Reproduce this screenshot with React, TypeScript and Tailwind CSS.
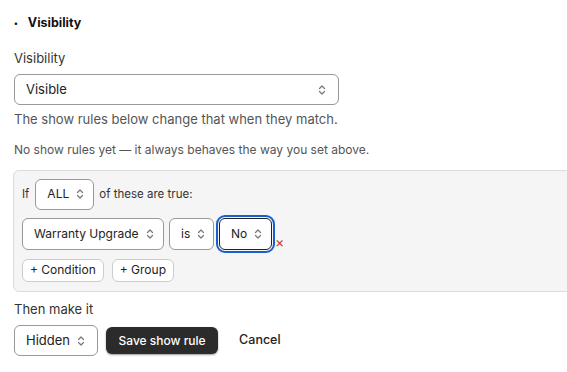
import React from 'react';

const Chevrons: React.FC = () => (
    <svg width="10" height="12" viewBox="0 0 10 12" fill="none" className="shrink-0 text-[#777]">
        <path d="M2.5 4.5 L5 2 L7.5 4.5" stroke="currentColor" strokeWidth="1.2" strokeLinecap="round" strokeLinejoin="round" />
        <path d="M2.5 7.5 L5 10 L7.5 7.5" stroke="currentColor" strokeWidth="1.2" strokeLinecap="round" strokeLinejoin="round" />
    </svg>
);

const Select: React.FC<{ label: string; className?: string; focused?: boolean }> = ({ label, className = '', focused }) => (
    <div
        className={`flex items-center justify-between gap-[6px] whitespace-nowrap rounded-[6px] border bg-white px-[11px] text-[#222] ${
            focused ? 'border-[#222] outline-2 outline-[#1a5fd0] outline-offset-[1px]' : 'border-[#999]'
        } ${className}`}
    >
        <span>{label}</span>
        <Chevrons />
    </div>
);

export default function App() {
    return (
        <div className="min-h-[372px] w-[567px] overflow-hidden bg-white font-['Inter',sans-serif] text-[#222]">
            {/* Section heading */}
            <div className="flex items-center gap-[10px] pl-[14px] pt-[14px] text-[12.5px] font-bold text-[#111]">
                <span className="text-[8px]">•</span>
                <span>Visibility</span>
            </div>

            <div className="px-[14px] pt-[16px]">
                <div className="text-[13px] text-[#333]">Visibility</div>
                <Select label="Visible" className="mt-[6px] h-[31px] w-[325px] text-[13px]" />
                <div className="mt-[5px] text-[13px] text-[#555]">The show rules below change that when they match.</div>
                <div className="mt-[11px] text-[12px] text-[#555]">No show rules yet — it always behaves the way you set above.</div>
            </div>

            {/* Rule group */}
            <div className="ml-[13px] mt-[11px] w-[580px] rounded-[6px] border border-[#dcdcdc] bg-[#f5f5f5] pb-[9px] pl-[8px] pt-[8px]">
                <div className="flex items-center gap-[5px] text-[11.5px] text-[#333]">
                    <span className="mr-[1px]">If</span>
                    <Select label="ALL" className="h-[31px] w-[59px] text-[12px]" />
                    <span>of these are true:</span>
                </div>
                <div className="mt-[8px] flex items-center gap-[5px]">
                    <Select label="Warranty Upgrade" className="h-[32px] w-[142px] text-[12px]" />
                    <Select label="is" className="h-[32px] w-[45px] text-[12px]" />
                    <Select label="No" className="h-[32px] w-[53px] text-[12px]" focused />
                    <span className="-ml-[2px] mt-[16px] text-[14px] leading-none text-[#c0392b]">×</span>
                </div>
                <div className="mt-[9px] flex items-center gap-[8px]">
                    <button className="h-[23px] rounded-[6px] border border-[#ccc] bg-white px-[7px] text-[12px] text-[#222]">+ Condition</button>
                    <button className="h-[23px] rounded-[6px] border border-[#ccc] bg-white px-[7px] text-[12px] text-[#222]">+ Group</button>
                </div>
            </div>

            {/* Action */}
            <div className="px-[14px] pt-[8px]">
                <div className="text-[13px] text-[#333]">Then make it</div>
                <div className="mt-[6px] flex items-center">
                    <Select label="Hidden" className="h-[31px] w-[84px] text-[13px]" />
                    <button className="ml-[8px] h-[27px] rounded-[6px] bg-[#2b2b2b] px-[12.5px] text-[12px] font-medium text-white shadow-[0_1px_2px_rgba(0,0,0,0.4)]">
                        Save show rule
                    </button>
                    <button className="ml-[11px] px-[10px] text-[12.5px] font-medium text-[#222]">Cancel</button>
                </div>
            </div>
        </div>
    );
}
